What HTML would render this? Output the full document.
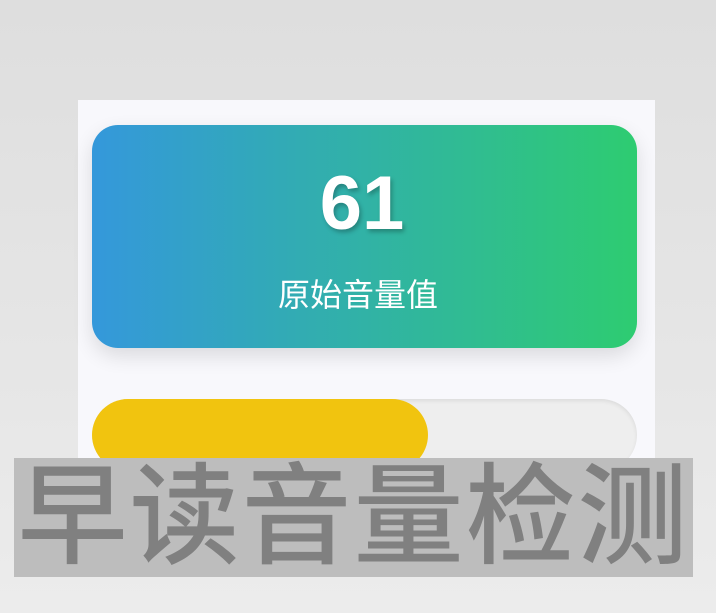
<!DOCTYPE html>
<html><head><meta charset="utf-8"><style>
html,body{margin:0;padding:0}
body{width:716px;height:613px;position:relative;overflow:hidden;background:linear-gradient(#dedede,#e6e6e6 60%,#ececec);font-family:"Liberation Sans","Noto Sans CJK SC",sans-serif}
.panel{position:absolute;left:78px;top:100px;width:577px;height:477px;background:#f8f8fc}
.card{position:absolute;left:92px;top:125px;width:545px;height:223px;border-radius:26px;background:linear-gradient(90deg,#3498db,#2ecc71);box-shadow:0 8px 20px rgba(0,0,0,0.12)}
.num{position:absolute;left:0;right:0;top:162px;font-size:76px;font-weight:bold;text-align:center;color:#fff;text-shadow:2px 3px 4px rgba(0,0,0,0.25);line-height:84px;padding-left:8px}
.lbl{position:absolute;left:0;right:0;top:274px;font-size:32px;text-align:center;color:#fff;line-height:42px}
.bar{position:absolute;left:92px;top:399px;width:545px;height:72px;border-radius:36px;background:#eeeeee;box-shadow:inset 0 2px 4px rgba(0,0,0,0.08)}
.fill{position:absolute;left:92px;top:399px;width:336px;height:72px;border-radius:36px;background:#f1c40f}
.ov{position:absolute;left:14px;top:458px;width:679px;height:119px;background:#bdbdbd;color:#808080;font-size:110px;font-weight:500;line-height:119px;text-align:center;white-space:nowrap;letter-spacing:2px}
</style></head><body>
<div class="panel"></div>
<div class="card"></div>
<div class="num">61</div>
<div class="lbl">原始音量值</div>
<div class="bar"></div>
<div class="fill"></div>
<div class="ov">早读音量检测</div>
</body></html>
